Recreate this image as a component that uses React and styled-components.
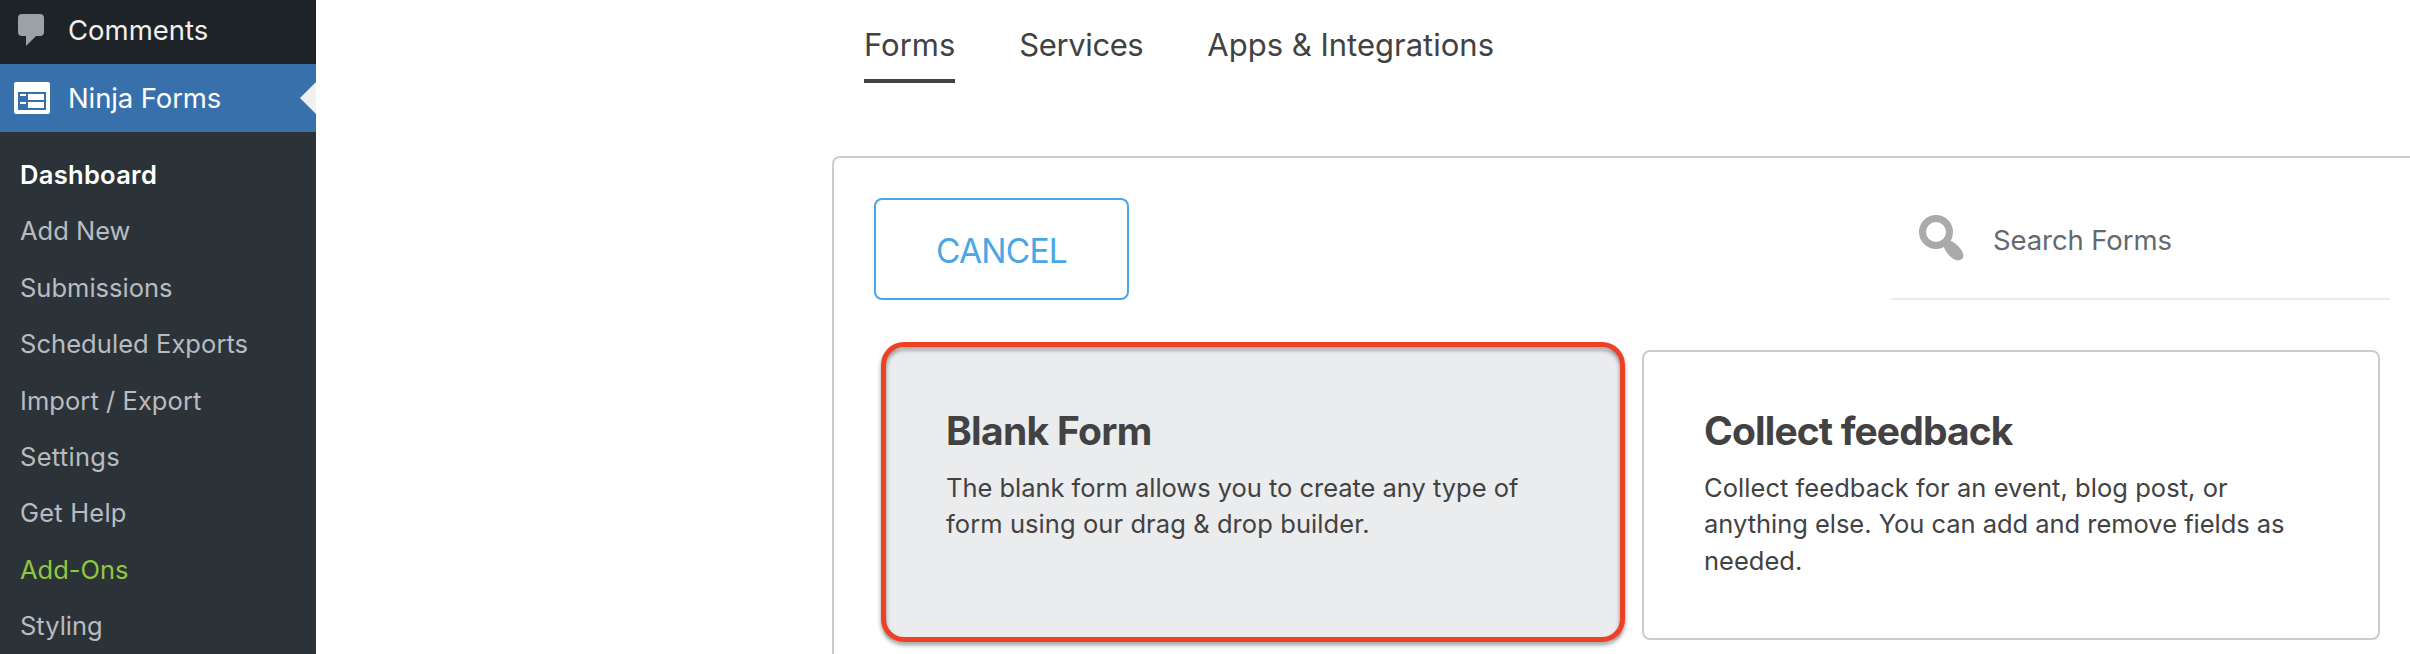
import React from 'react';
import styled, { createGlobalStyle } from 'styled-components';

const GlobalStyle = createGlobalStyle`
  * {
    box-sizing: border-box;
  }
  body {
    margin: 0;
    background: #fff;
    font-family: Inter, 'Liberation Sans', sans-serif;
    overflow: hidden;
  }
`;

const Page = styled.div`
  display: flex;
  width: 2410px;
  height: 654px;
  overflow: hidden;
`;

const Sidebar = styled.nav`
  flex: none;
  width: 316px;
  background: #1d2327;
`;

const MenuItem = styled.a`
  display: flex;
  align-items: center;
  position: relative;
  height: ${({ $active }) => ($active ? 68 : 64)}px;
  padding-left: 14px;
  gap: 18px;
  color: ${({ $active }) => ($active ? '#fff' : '#f0f0f1')};
  background: ${({ $active }) => ($active ? '#3870ac' : 'transparent')};
  font-size: 27.5px;
`;

const MenuIcon = styled.svg`
  flex: none;
  width: 36px;
  height: 36px;
`;

const MenuText = styled.span`
  padding-bottom: ${({ $lift }) => $lift || 0}px;
  white-space: nowrap;
  letter-spacing: ${({ $track }) => $track || 0}px;
`;

const Pointer = styled.span`
  position: absolute;
  right: 0;
  top: 18px;
  border: 16px solid transparent;
  border-left-width: 0;
  border-right-color: #f0f0f1;
`;

const SubMenu = styled.ul`
  list-style: none;
  margin: 0;
  padding: 15px 0 0;
  height: 522px;
  background: #2c3338;
`;

const SubItem = styled.li`
  padding: 10px 20px;
  font-size: 25.5px;
  line-height: 36.4px;
  white-space: nowrap;
  font-weight: ${({ $current }) => ($current ? 600 : 400)};
  color: ${({ $color }) => $color || '#b8bcc0'};
  letter-spacing: ${({ $track }) => $track || 0}px;
`;

const Main = styled.main`
  flex: none;
  width: 2130px;
  padding-left: 516px;
  color: #424242;
`;

const Tabs = styled.div`
  display: flex;
  height: 83px;
  margin-left: 32px;
  gap: 64px;
`;

const Tab = styled.a`
  height: 83px;
  padding-top: 23px;
  font-size: 31px;
  line-height: 44px;
  white-space: nowrap;
  border-bottom: 4px solid ${({ $active }) => ($active ? '#424242' : 'transparent')};
  letter-spacing: ${({ $track }) => $track || 0}px;
`;

const Panel = styled.section`
  margin-top: 73px;
  height: 700px;
  padding: 40px 0 0 40px;
  border: 2px solid #ccc;
  border-radius: 8px;
`;

const Toolbar = styled.div`
  display: flex;
  justify-content: space-between;
  width: 1516px;
  height: 102px;
`;

const CancelButton = styled.button`
  width: 255px;
  height: 102px;
  padding: 3px 0 0;
  border: 2px solid #4aa6e6;
  border-radius: 8px;
  background: transparent;
  color: #4aa6e6;
  font-family: inherit;
  font-size: 33.5px;
  letter-spacing: -0.8px;
`;

const SearchBox = styled.label`
  display: flex;
  align-items: center;
  width: 499px;
  height: 102px;
  padding: 0 0 18px 28px;
  gap: 29px;
  border-bottom: 2px solid #ebebeb;
  color: #646970;
  font-size: 27.5px;
  letter-spacing: -0.1px;
`;

const SearchIcon = styled.svg`
  flex: none;
  width: 45px;
  height: 46px;
  margin-top: -2px;
`;

const SearchText = styled.span`
  padding-top: 2px;
`;

const Cards = styled.div`
  display: flex;
  gap: 20px;
  margin: 50px 0 0 10px;
`;

const Card = styled.article`
  position: relative;
  width: 738px;
  height: 290px;
  padding: 54px 60px 0;
  border: 2px solid ${({ $selected }) => ($selected ? '#ebecee' : '#ccc')};
  border-radius: 8px;
  background: ${({ $selected }) => ($selected ? '#ebecee' : '#fff')};
`;

const Highlight = styled.div`
  position: absolute;
  inset: -10px -5px -4px;
  border: 5px solid #ee4025;
  border-radius: 23px;
  filter: drop-shadow(0 3px 2px rgba(0, 0, 0, 0.4));
`;

const CardTitle = styled.h3`
  margin: 0;
  font-size: 39px;
  line-height: 50px;
  font-weight: 700;
  white-space: nowrap;
  letter-spacing: ${({ $track }) => $track || 0}px;
`;

const CardText = styled.p`
  margin: 14px 0 0;
  font-size: 25.5px;
  line-height: 36.4px;
`;

const CardLine = styled.span`
  display: block;
  white-space: nowrap;
  letter-spacing: ${({ $track }) => $track || 0}px;
`;

const subItems = [
  { label: 'Dashboard', color: '#fff', current: true, track: 0.3 },
  { label: 'Add New' },
  { label: 'Submissions' },
  { label: 'Scheduled Exports', track: 0.06 },
  { label: 'Import / Export', track: 0.06 },
  { label: 'Settings', track: 0.3 },
  { label: 'Get Help', track: 0.2 },
  { label: 'Add-Ons', color: '#8fc73e' },
  { label: 'Styling' }
];

const tabs = [
  { label: 'Forms', active: true },
  { label: 'Services', track: -0.4 },
  { label: 'Apps & Integrations' }
];

const cards = [
  {
    title: 'Blank Form',
    track: -0.7,
    selected: true,
    lines: [
      { text: 'The blank form allows you to create any type of', track: -0.03 },
      { text: 'form using our drag & drop builder.', track: 0.08 }
    ]
  },
  {
    title: 'Collect feedback',
    track: -0.87,
    lines: [
      { text: 'Collect feedback for an event, blog post, or', track: 0.05 },
      { text: 'anything else. You can add and remove fields as', track: -0.03 },
      { text: 'needed.' }
    ]
  }
];

const App = () => (
  <>
    <GlobalStyle />
    <Page>
      <Sidebar>
        <MenuItem>
          <MenuIcon viewBox="0 0 36 36">
            <path
              fill="#9ca1a7"
              d="M8 0h18a4 4 0 0 1 4 4v14a4 4 0 0 1-4 4h-4L12 32V22H8a4 4 0 0 1-4-4V4a4 4 0 0 1 4-4z"
            />
          </MenuIcon>
          <MenuText $lift={4}>Comments</MenuText>
        </MenuItem>
        <MenuItem $active>
          <MenuIcon viewBox="0 0 36 36">
            <rect y="2" width="36" height="32" rx="2" fill="#fff" />
            <path
              fill="#3870ac"
              fillRule="evenodd"
              d="M4 12h28v18H4zM6 14v2h6v-2zM14 14v6h16v-6zM6 22v2h6v-2zM14 22v6h16v-6z"
            />
          </MenuIcon>
          <MenuText $track={-0.12}>Ninja Forms</MenuText>
          <Pointer />
        </MenuItem>
        <SubMenu>
          {subItems.map(({ label, color, current, track }) => (
            <SubItem key={label} $color={color} $current={current} $track={track}>
              {label}
            </SubItem>
          ))}
        </SubMenu>
      </Sidebar>
      <Main>
        <Tabs>
          {tabs.map(({ label, active, track }) => (
            <Tab key={label} $active={active} $track={track}>
              {label}
            </Tab>
          ))}
        </Tabs>
        <Panel>
          <Toolbar>
            <CancelButton>CANCEL</CancelButton>
            <SearchBox>
              <SearchIcon viewBox="0 0 45 46">
                <circle cx="17" cy="17" r="13.5" fill="none" stroke="#aaa" strokeWidth="7" />
                <path
                  fill="#aaa"
                  d="M24.5 31.5L31 25.5C37 28 43 34 44.3 39.5C45 44 41.5 46 37.5 45.2C31 43.5 27 37 24.5 31.5z"
                />
              </SearchIcon>
              <SearchText>Search Forms</SearchText>
            </SearchBox>
          </Toolbar>
          <Cards>
            {cards.map(({ title, track, selected, lines }) => (
              <Card key={title} $selected={selected}>
                <CardTitle $track={track}>{title}</CardTitle>
                <CardText>
                  {lines.map(line => (
                    <CardLine key={line.text} $track={line.track}>
                      {line.text}
                    </CardLine>
                  ))}
                </CardText>
                {selected && <Highlight />}
              </Card>
            ))}
          </Cards>
        </Panel>
      </Main>
    </Page>
  </>
);

export default App;
